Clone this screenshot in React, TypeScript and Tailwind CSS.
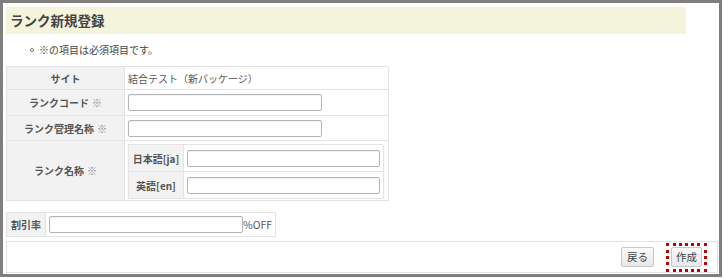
import React from "react"

const font = { fontFamily: '"Noto Sans CJK JP", "Noto Sans", sans-serif' }

function Req() {
  return <span className="ml-[3px] font-normal text-[#8a8a8a]">※</span>
}

function TextBox({ className = "" }: { className?: string }) {
  return (
    <div
      className={
        "h-[17px] rounded-[2px] border border-[#b5b5b5] bg-white shadow-[inset_0_1px_1px_rgba(0,0,0,0.06)] " +
        className
      }
    />
  )
}

export default function App() {
  return (
    <div style={font} className="w-[722px] h-[277px] border-[3px] border-[#7f7f7f] bg-white text-[#555]">
      <div className="pl-[3px] flex flex-col">
        <div className="mt-[4px] h-[27px] w-[680px] bg-[#f4f4dc] pl-[4px] flex items-center text-[13.5px] font-bold text-[#444]">
          ランク新規登録
        </div>

        <div className="h-[32px] flex items-center pl-[24px] pb-[1px] text-[10px] text-[#444]">
          <span className="w-[4px] h-[4px] rounded-full border border-[#777] mr-[5px]" />
          ※の項目は必須項目です。
        </div>

        <div className="w-[382px] grid grid-cols-[118px_264px] border-l border-t border-[#e3e3e3] text-[10px]">
          <div className="h-[23px] bg-[#f2f2f2] border-r border-b border-[#e3e3e3] flex items-center justify-center font-bold">
            サイト
          </div>
          <div className="h-[23px] border-r border-b border-[#e3e3e3] flex items-center pl-[3px] text-[#555]">
            結合テスト（新パッケージ）
          </div>

          <div className="h-[26px] bg-[#f2f2f2] border-r border-b border-[#e3e3e3] flex items-center justify-center font-bold">
            ランクコード<Req />
          </div>
          <div className="h-[26px] border-r border-b border-[#e3e3e3] flex items-center pl-[3px]">
            <TextBox className="w-[194px]" />
          </div>

          <div className="h-[25px] bg-[#f2f2f2] border-r border-b border-[#e3e3e3] flex items-center justify-center font-bold">
            ランク管理名称<Req />
          </div>
          <div className="h-[25px] border-r border-b border-[#e3e3e3] flex items-center pl-[3px]">
            <TextBox className="w-[194px]" />
          </div>

          <div className="h-[60px] bg-[#f2f2f2] border-r border-b border-[#e3e3e3] flex items-center justify-center font-bold">
            ランク名称<Req />
          </div>
          <div className="h-[60px] border-r border-b border-[#e3e3e3] pl-[3px] pt-[3px]">
            <div className="w-[255px] grid grid-cols-[55px_200px] border-l border-t border-[#e3e3e3]">
              <div className="h-[27px] bg-[#f2f2f2] border-r border-b border-[#e3e3e3] flex items-center justify-center font-bold">
                日本語[ja]
              </div>
              <div className="h-[27px] border-r border-b border-[#e3e3e3] flex items-center pl-[3px]">
                <TextBox className="w-[193px]" />
              </div>
              <div className="h-[27px] bg-[#f2f2f2] border-r border-b border-[#e3e3e3] flex items-center justify-center font-bold">
                英語[en]
              </div>
              <div className="h-[27px] border-r border-b border-[#e3e3e3] flex items-center pl-[3px]">
                <TextBox className="w-[193px]" />
              </div>
            </div>
          </div>
        </div>

        <div className="mt-[11px] w-[270px] h-[25px] flex border border-[#e3e3e3] text-[10px]">
          <div className="w-[39px] bg-[#f2f2f2] border-r border-[#e3e3e3] flex items-center justify-center font-bold">
            割引率
          </div>
          <div className="flex items-center pl-[3px]">
            <TextBox className="w-[194px]" />
            <span className="text-[10.5px] text-[#555]">%OFF</span>
          </div>
        </div>

        <div className="mt-[4px] w-[712px] h-[32px] border border-[#e3e3e3] flex items-center justify-end pr-[10px] text-[10.5px] text-[#444]">
          <button className="h-[20px] w-[33px] rounded-[2px] border border-[#c8c8c8] bg-gradient-to-b from-[#fafafa] to-[#e8e8e8] flex items-center justify-center">
            戻る
          </button>
          <div className="ml-[12px] w-[41px] h-[29px] border-[3px] border-dotted border-[#c00000] flex items-center justify-center">
            <button className="h-[20px] w-[31px] rounded-[2px] border border-[#c8c8c8] bg-gradient-to-b from-[#fafafa] to-[#e8e8e8] flex items-center justify-center">
              作成
            </button>
          </div>
        </div>
      </div>
    </div>
  )
}
